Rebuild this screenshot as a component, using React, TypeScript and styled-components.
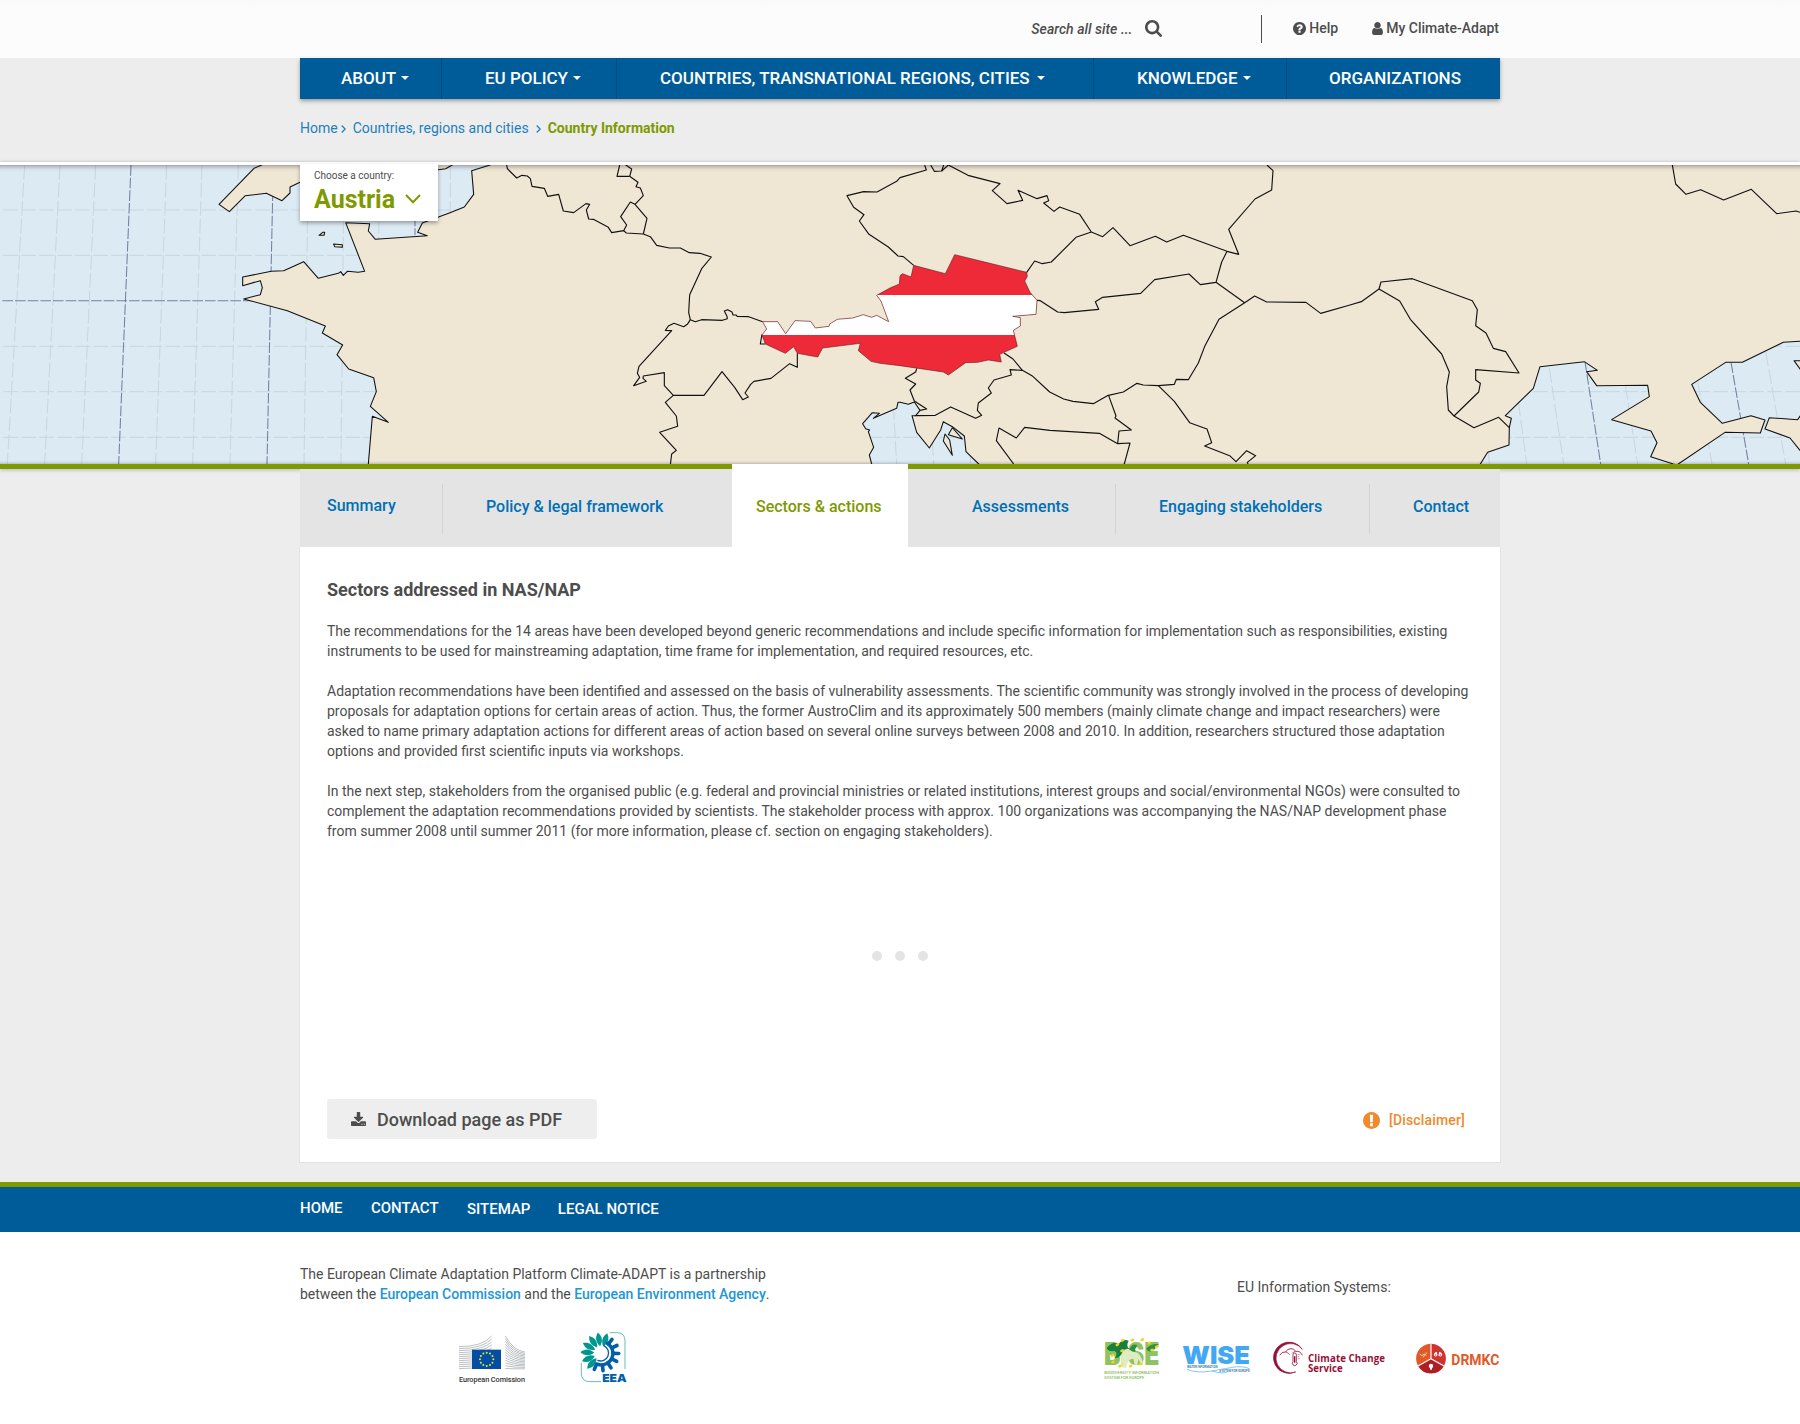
import React from "react";
import styled, { createGlobalStyle } from "styled-components";

const GlobalStyle = createGlobalStyle`
  *, *::before, *::after { box-sizing: border-box; }
  body { margin: 0; background: #ededed; color: #4d4d4d; font-family: Roboto, "Liberation Sans", sans-serif; font-size: 14px; }
  h2, p { margin: 0; }
  svg { display: block; flex: none; }
  a { color: inherit; text-decoration: none; }
`;

const BLUE = "#005c98";
const GREEN = "#7f9900";

const Page = styled.div`
  width: 1800px;
  height: 1424px;
  overflow: hidden;
  display: flex;
  flex-direction: column;
`;

const Container = styled.div`
  width: 1200px;
  margin: 0 auto;
`;

const TopBar = styled.header`
  height: 58px;
  background: linear-gradient(#fafafa, #fcfcfc 10px);
`;

const TopTools = styled(Container)`
  display: flex;
  align-items: center;
  justify-content: flex-end;
  height: 56px;
  padding-right: 1px;
  font-weight: 500;
  line-height: 20px;
`;

const SearchLabel = styled.span`
  font-style: italic;
  letter-spacing: 0.04px;
  margin: 2px 13px 0 0;
`;

const Separator = styled.span`
  width: 1px;
  height: 28px;
  margin: 2px 31px 0 99px;
  background: #4d4d4d;
`;

const ToolLink = styled.a<{ $after?: number }>`
  display: flex;
  align-items: center;
  gap: 3px;
  margin-right: ${(p) => p.$after ?? 0}px;
`;

const MainNav = styled.nav`
  position: relative;
  width: 1200px;
  height: 41px;
  margin: 0 auto;
  display: grid;
  grid-template-columns: 142px 175px 477px 193px 213px;
  background: ${BLUE};
  box-shadow: 0 2px 4px rgba(0, 0, 0, 0.35);
`;

const NavItem = styled.a<{ $indent: number; $gap?: number }>`
  display: flex;
  align-items: center;
  gap: ${(p) => p.$gap ?? 5}px;
  padding: 0 0 2px ${(p) => p.$indent}px;
  border-right: 1px solid #004c80;
  color: #fff;
  font-size: 17px;
  line-height: 20px;
  font-weight: 500;
  white-space: nowrap;
  &:last-child { border-right: 0; }
`;

const Caret = styled.i`
  border: 4px solid transparent;
  border-top-color: #fff;
  border-bottom: 0;
`;

const Breadcrumb = styled(Container)`
  display: flex;
  align-items: center;
  height: 63px;
  padding-bottom: 5px;
  color: #1f7fbc;
  line-height: 20px;
`;

const Crumb = styled.a<{ $current?: boolean }>`
  color: ${(p) => (p.$current ? GREEN : "inherit")};
  font-weight: ${(p) => (p.$current ? 700 : 400)};
`;

const CrumbArrow = styled.svg<{ $before: number; $after: number }>`
  margin: 1px ${(p) => p.$after}px 0 ${(p) => p.$before}px;
`;

const Hero = styled.section`
  position: relative;
  height: 307px;
  border-top: 3px solid #fff;
  border-bottom: 5px solid ${GREEN};
  box-shadow: 0 -1px 2px rgba(0, 0, 0, 0.12), 0 2px 3px rgba(0, 0, 0, 0.15);
  &::after {
    content: "";
    position: absolute;
    inset: 0 -8px;
    box-shadow: inset 0 2px 4px rgba(0, 0, 0, 0.3), inset 0 -1px 3px rgba(0, 0, 0, 0.18);
  }
`;

const CountryPicker = styled.div`
  position: absolute;
  z-index: 1;
  left: 300px;
  top: -1px;
  width: 138px;
  height: 57px;
  padding: 5px 14px 0;
  background: #fff;
  box-shadow: 0 2px 4px rgba(0, 0, 0, 0.35);
`;

const PickerLabel = styled.div`
  font-size: 10px;
  line-height: 14px;
`;

const PickerValue = styled.div`
  display: flex;
  align-items: center;
  justify-content: space-between;
  padding-right: 3px;
  margin-top: 2px;
  color: ${GREEN};
  font-size: 25px;
  font-weight: 700;
  line-height: 30px;
`;

const Chevron = styled.svg`
  margin-top: -2px;
`;

const Tabs = styled.nav`
  position: relative;
  width: 1200px;
  height: 78px;
  margin: 0 auto;
  display: grid;
  grid-template-columns: 142px 290px 176px 207px 254px 131px;
  background: #e4e4e4;
`;

const Tab = styled.a<{ $indent: number; $active?: boolean; $divided?: boolean; $lift?: number }>`
  position: relative;
  margin-top: ${(p) => (p.$active ? -5 : 0)}px;
  padding: ${(p) => (p.$active ? 33 : 28 - (p.$lift ?? 0))}px 0 0 ${(p) => p.$indent}px;
  background: ${(p) => (p.$active ? "#fff" : "transparent")};
  color: ${(p) => (p.$active ? GREEN : "#0070b4")};
  font-size: 16px;
  font-weight: 500;
  line-height: 20px;
  white-space: nowrap;
  &::after {
    content: "";
    display: ${(p) => (p.$divided ? "block" : "none")};
    position: absolute;
    right: -1px;
    top: 15px;
    width: 1px;
    height: 50px;
    background: #d3d3d3;
  }
`;

const Panel = styled.main`
  width: 1200px;
  height: 615px;
  margin: 0 auto 20px;
  padding: 31px 27px 23px;
  background: #fff;
  box-shadow: 0 0 0 1px #e3e3e3;
  display: flex;
  flex-direction: column;
  clip-path: inset(0 -1px -1px -1px);
`;

const Title = styled.h2`
  font-size: 18px;
  line-height: 24px;
  font-weight: 700;
  margin-bottom: 19px;
`;

const Prose = styled.div`
  display: flex;
  flex-direction: column;
  gap: 20px;
  line-height: 20px;
  white-space: nowrap;
`;

const Dots = styled.div`
  display: flex;
  justify-content: center;
  gap: 13px;
  margin-top: 110px;
`;

const Dot = styled.i`
  width: 10px;
  height: 10px;
  border-radius: 50%;
  background: #e4e4e4;
`;

const Actions = styled.div`
  display: flex;
  align-items: center;
  justify-content: space-between;
  margin-top: auto;
`;

const DownloadButton = styled.button`
  display: flex;
  align-items: center;
  gap: 11px;
  width: 270px;
  height: 40px;
  padding: 0 0 0 24px;
  border: 0;
  border-radius: 3px;
  background: #eee;
  color: #4d4d4d;
  font: 500 18px Roboto, sans-serif;
`;

const Disclaimer = styled.a`
  display: flex;
  align-items: center;
  gap: 9px;
  margin-right: 8px;
  padding-top: 2px;
  color: #f08a2c;
  font-weight: 500;
  letter-spacing: 0.15px;
`;

const FooterBar = styled.div`
  height: 50px;
  border-top: 5px solid ${GREEN};
  background: ${BLUE};
`;

const FooterLinks = styled(Container)`
  display: flex;
  gap: 28.4px;
  padding-top: 11px;
  color: #fff;
  font-size: 15px;
  font-weight: 500;
  line-height: 20px;
`;

const FooterLink = styled.a<{ $drop?: boolean }>`
  padding-top: ${(p) => (p.$drop ? 1 : 0)}px;
  &:last-child { margin-left: -1px; }
`;

const Footer = styled.footer`
  flex: 1;
  background: #fff;
`;

const FooterGrid = styled(Container)`
  display: flex;
  justify-content: space-between;
`;

const Partners = styled.div`
  padding-top: 32px;
  line-height: 20px;
`;

const PartnerLink = styled.a`
  color: #2196d8;
  font-weight: 500;
`;

const PartnerLogos = styled.div`
  display: flex;
  gap: 55px;
  margin: 28px 0 0 159px;
`;

const Systems = styled.div`
  width: 396px;
  padding-top: 45px;
  line-height: 20px;
`;

const SystemsLabel = styled.div`
  margin-left: 133px;
`;

const SystemLogos = styled.div`
  display: flex;
  gap: 22px;
  margin-top: 41px;
  svg:last-child { margin-left: auto; }
`;

const LogoSvg = styled.svg`
  overflow: visible;
`;

const icons = {
  search:
    "M1216 832q0-185-131.5-316.5t-316.5-131.5-316.5 131.5-131.5 316.5 131.5 316.5 316.5 131.5 316.5-131.5 131.5-316.5zm512 832q0 52-38 90t-90 38q-54 0-90-38l-343-342q-179 124-399 124-143 0-273.5-55.5t-225-150-150-225-55.5-273.5 55.5-273.5 150-225 225-150 273.5-55.5 273.5 55.5 225 150 150 225 55.5 273.5q0 220-124 399l343 343q37 37 37 90z",
  help: "M1024 1376v-192q0-14-9-23t-23-9h-192q-14 0-23 9t-9 23v192q0 14 9 23t23 9h192q14 0 23-9t9-23zm256-672q0-88-55.5-163t-138.5-116-170-41q-243 0-371 213-15 24 8 42l132 100q7 6 19 6 16 0 25-12 53-68 86-92 34-24 86-24 48 0 85.5 26t37.5 59q0 38-20 61t-68 45q-63 28-115.5 86.5t-52.5 125.5v36q0 14 9 23t23 9h192q14 0 23-9t9-23q0-19 21.5-49.5t54.5-49.5q32-18 49-28.5t46-35 44.5-48 28-60.5 12.5-81zm384 192q0 209-103 385.5t-279.5 279.5-385.5 103-385.5-103-279.5-279.5-103-385.5 103-385.5 279.5-279.5 385.5-103 385.5 103 279.5 279.5 103 385.5z",
  user: "M1536 1399q0 109-62.5 187t-150.5 78h-854q-88 0-150.5-78t-62.5-187q0-85 8.5-160.5t31.5-152 58.5-131 94-89 134.5-34.5q131 128 313 128t313-128q76 0 134.5 34.5t94 89 58.5 131 31.5 152 8.5 160.5zm-256-887q0 159-112.5 271.5t-271.5 112.5-271.5-112.5-112.5-271.5 112.5-271.5 271.5-112.5 271.5 112.5 112.5 271.5z",
  download:
    "M1280 1344q0-26-19-45t-45-19-45 19-19 45 19 45 45 19 45-19 19-45zm256 0q0-26-19-45t-45-19-45 19-19 45 19 45 45 19 45-19 19-45zm128-224v320q0 40-28 68t-68 28h-1472q-40 0-68-28t-28-68v-320q0-40 28-68t68-28h465l135 136q58 56 136 56t136-56l136-136h464q40 0 68 28t28 68zm-325-569q17 41-14 70l-448 448q-18 19-45 19t-45-19l-448-448q-31-29-14-70 17-39 59-39h256v-448q0-26 19-45t45-19h256q26 0 45 19t19 45v448h256q42 0 59 39z",
  alert:
    "M896 128q209 0 385.5 103t279.5 279.5 103 385.5-103 385.5-279.5 279.5-385.5 103-385.5-103-279.5-279.5-103-385.5 103-385.5 279.5-279.5 385.5-103zm128 1247v-190q0-14-9-23.5t-22-9.5h-192q-13 0-23 10t-10 23v190q0 13 10 23t23 10h192q13 0 22-9.5t9-23.5zm-2-344l18-621q0-12-10-18-10-8-24-8h-220q-14 0-24 8-10 6-10 18l17 621q0 10 10 17.5t24 7.5h185q14 0 23.5-7.5t10.5-17.5z",
};

function Icon({ name, box, w, h }: { name: keyof typeof icons; box: string; w: number; h: number }) {
  return (
    <svg viewBox={box} width={w} height={h} fill="currentColor">
      <path d={icons[name]} />
    </svg>
  );
}

/* Map geometry: four 1350-unit tiles side by side, three units to a pixel. */
type Line = [number, string];

const land =
  "M1100 990L1105 927L1117 784L1165 802L1111 754L1129 710L1121 668L1046 642L1011 599L1028 570L967 534L976 513L862 467L731 432L781 419L787 398L781 377L728 392V366L814 349L851 347L911 320L955 370L1015 355L1022 350L1030 361L1042 349L1075 352L1094 349L1037 203L1109 206L1105 228L1126 253L1282 242L1253 232L1267 204L1350 173L1393 156L1421 118L1415 47L1470 30L1520 0H5500V990Z" +
  "M2622 960L2615 927L2608 900L2621 877L2605 830L2609 825L2597 821L2588 806L2617 773L2638 775L2620 790L2690 760L2694 742H2700L2725 748L2743 741L2760 766L2747 782H2736L2750 832L2788 879L2822 825L2830 800L2857 815L2893 843L2898 890L2936 927L2970 960Z" +
  "M4421 960L4441 927L4463 892L4527 870L4528 818L4534 790L4516 782L4600 700L4620 635L4753 620L4792 646L4760 650L4790 692L4943 691L4948 725L4835 794L4953 828L4971 863L4952 905L5020 927L5100 950V990Z" +
  "M4980 963L5035 927L5175 832L5281 834L5295 795L5253 782L5167 805L5101 742L5075 688L5177 622H5227L5350 562L5400 559L5430 558V617H5382L5400 642L5430 670V740L5406 775L5393 794L5308 788L5295 822L5370 849L5400 886L5430 910V990Z";

const islands =
  "M657 148L762 40L785 30L800 15H1380L1350 34L1337 41L1314 44L1250 60L900 82L870 96V114L846 137L799 115L736 122L688 170Z" +
  "M957 241L968 232H974L972 241ZM1001 267L1027 269V277L1004 275Z" +
  "M2857 818L2887 852L2845 839ZM2835 837L2849 855L2857 901L2830 858Z";

const borders: Line[] = [
  [1350, "170,30 172,41 200,69 216,61 232,63 241,71 246,94 283,100 293,124 326,118 340,168 371,173 408,146 419,148 409,165 416,192 430,193 475,217 485,233 521,227 529,234 580,237 601,245 620,271 658,279 691,279 718,293 750,295 784,306 755,341 719,419 716,473 721,494 736,500 755,494 817,496 832,491 831,484 823,468 833,464 846,471 849,480 858,480 862,484 896,485 938,500"],
  [1350, "521,227 530,210 512,185 541,141 555,148 591,190 580,237"],
  [1350, "555,148 580,122 571,99 558,95 564,82 539,64 545,42 527,30"],
  [1350, "509,30 501,64 539,64"],
  [1350, "721,494 712,508 701,515 672,505 655,513 646,526 665,527 567,634 562,655 569,667 551,692 589,679 579,670 580,663 643,653 643,692 670,721 762,721 816,650 854,697 878,734 895,726 885,714 902,688 912,679 963,670 1019,626 1042,637 1042,595"],
  [1350, "670,721 646,742 679,783 683,814 629,832 679,886 665,897 661,930"],
  [1350, "936,538 931,567 946,567"],
  [2700, "74,30 79,45 0,68 -10,79 -69,111 -109,110 -159,122 -139,157 -108,179 -122,198 -93,238 -35,276 -6,303 10,305 41,331"],
  [2700, "92,30 103,49 125,48 145,30 204,61 300,86 277,107 321,146 368,136 354,106 411,131 441,122 446,137 431,144 462,169 479,156 539,178 574,231 608,245 639,218 690,272 766,244 800,261 850,241 981,289 1016,298 986,223 1065,132 1115,105 1119,47 1101,30"],
  [2700, "125,48 131,30"],
  [2700, "574,231 528,247 454,321 427,326 404,318 380,352"],
  [2700, "981,289 965,321 948,382 901,389 867,357 764,374 722,415 608,427 586,440 596,463 493,473 473,471 421,437 411,436"],
  [2700, "948,382 1034,443 957,493 915,572 895,624 865,674 829,673 823,688 775,692 730,690 711,685 670,711 622,722 580,746 519,739 491,732 449,711 396,662 367,646 339,612 312,594"],
  [2700, "1034,443 1064,423 1100,441 1218,442 1262,475 1350,450 1384,440 1437,402"],
  [4050, "87,402 93,381 187,371 367,437 382,464 377,512 408,534 430,580 467,590 507,654 377,644 377,675 391,685 386,711 312,783"],
  [4050, "87,402 149,438 181,493 275,597 298,651 290,695 295,765 312,783 372,818 446,787 478,818"],
  [4050, "967,30 977,87 1008,118 1052,104 1121,135 1204,103 1280,176 1338,168 1350,172"],
  [2700, "50,640 47,651 16,670 47,687 30,705 43,738 80,762 60,766"],
  [2700, "47,782 106,781 152,756 227,790 245,781 232,766 235,744 274,714 265,699 282,675 334,660 330,644 367,646"],
  [2700, "341,927 289,857 297,819 349,849 374,817 450,826 598,835 653,866 690,864 672,930"],
  [2700, "653,866 657,828 694,825 645,789 648,783 626,722"],
  [2700, "775,692 823,739 869,803 921,822 935,863 914,873 989,902 1008,920 1040,887 1067,902 1042,922 1045,930"],
];

const austria =
  "M2288 500H2333L2357 536L2385 497L2432 499L2446 519L2487 514L2489 507L2512 493L2558 489L2590 479L2615 487L2630 481L2666 500L2643 438L2630 421L2670 399L2698 387L2700 362L2708 356L2733 366L2741 331L2836 356L2864 299L2954 321L3080 352L3082 364L3074 378L3090 412L3111 436L3108 478L3038 484L3061 488V513L3040 526L3052 574L2999 598L3004 621L2965 615L2933 622L2897 623L2845 660L2830 651L2700 632L2640 625L2613 619L2575 587L2581 565L2468 579L2453 606L2392 595L2381 575L2356 595L2296 567L2286 540L2300 522Z";

const meridians: [number, number, number, number][] = [
  [74, 30, 22, 927], [180, 30, 134, 927], [287, 30, 245, 927], [500, 30, 467, 927], [606, 30, 578, 927],
  [715, 30, 690, 927], [925, 30, 912, 927], [1032, 30, 1023, 927], [1138, 30, 1136, 260], [1351, 30, 1351, 180],
  [2680, 750, 2690, 927], [2797, 860, 2801, 927], [2910, 880, 2912, 927], [4465, 890, 4468, 927],
  [4555, 740, 4580, 927], [4648, 640, 4691, 927], [4876, 690, 4913, 927], [5093, 680, 5136, 927], [5297, 590, 5357, 927],
];

const mainMeridians: [number, number, number, number][] = [
  [393, 30, 356, 927], [820, 30, 801, 927], [1245, 30, 1245, 240], [4755, 620, 4802, 927], [5193, 622, 5246, 927],
];

function EuropeMap() {
  return (
    <svg viewBox="0 30 5400 897" width="1800" height="299">
      <defs>
        <clipPath id="austria">
          <path d={austria} />
        </clipPath>
      </defs>
      <rect y="30" width="5400" height="897" fill="#dceaf3" />
      <g stroke="#c8d6de" strokeWidth="3" strokeDasharray="44 10">
        {meridians.map(([x1, y1, x2, y2]) => (
          <line key={x1} x1={x1} y1={y1} x2={x2} y2={y2} />
        ))}
        {[165, 301, 574, 710, 847].map((y) => (
          <line key={y} x1="10" x2="5400" y1={y} y2={y} />
        ))}
      </g>
      <g stroke="#77809f" strokeWidth="3.2" strokeDasharray="32 6">
        {mainMeridians.map(([x1, y1, x2, y2]) => (
          <line key={x1} x1={x1} y1={y1} x2={x2} y2={y2} />
        ))}
        <line x1="7" x2="760" y1="437" y2="437" />
      </g>
      <g fill="#efe6d4" stroke="#111" strokeWidth="3.2" strokeLinejoin="round">
        <path d={land} fillRule="evenodd" />
        <path d={islands} />
      </g>
      <g fill="none" stroke="#111" strokeWidth="3.4" strokeLinejoin="round">
        {borders.map(([dx, points]) => (
          <polyline key={points} points={points} transform={`translate(${dx} 0)`} />
        ))}
      </g>
      <g clipPath="url(#austria)">
        <rect x="2270" y="290" width="860" height="380" fill="#ee2a39" />
        <rect x="2270" y="420" width="860" height="120" fill="#fff" />
      </g>
      <path d={austria} fill="none" stroke="#5a1a20" strokeWidth="1.8" />
    </svg>
  );
}

const range = (n: number) => Array.from({ length: n }, (_, i) => i);

function CommissionLogo() {
  return (
    <LogoSvg viewBox="507 756 198 156" width="66" height="52">
      <g fill="none" stroke="#a3a7aa" strokeWidth="2.2">
        {range(12).map((i) => (
          <path key={i} d={`M507 ${800 + i * 6}Q578 ${800 + i * 5.6} 605 ${768 + i * 9}`} />
        ))}
        {range(13).map((i) => (
          <path key={i} d={`M646 ${768 + i * 8.1}Q670 ${812 + i * 4.6} 705 ${816 + i * 4.2}`} />
        ))}
      </g>
      <rect x="546" y="809" width="87" height="58" fill="#034ea2" />
      {range(12).map((i) => (
        <circle key={i} cx={590 + 20 * Math.sin((i * Math.PI) / 6)} cy={838 - 20 * Math.cos((i * Math.PI) / 6)} r="3" fill="#e8e337" />
      ))}
      <text x="507" y="905" fontSize="22" fontWeight="500" fill="#333" textLength="198">
        European Comission
      </text>
    </LogoSvg>
  );
}

function EeaLogo() {
  return (
    <LogoSvg viewBox="870 756 142 154" width="47" height="51">
      <g fill="none" stroke="#66bdb5" strokeWidth="3">
        <path d="M960 758H982Q1006 758 1006 783V868" />
        <path d="M874 849V880Q874 906 900 906H934" />
      </g>
      <g fill="#009790">
        {[17, -9, -35, -61, -87, -113, -138].map((a) => (
          <path key={a} d="M0 -21C-12 -36 -11 -50 0 -63C11 -50 12 -36 0 -21Z" transform={`translate(934 820) rotate(${a})`} />
        ))}
      </g>
      <g stroke="#005fa8" strokeWidth="11" fill="none" strokeLinecap="round">
        {[38, 64, 91, 118, 146, 174, 203].map((a) => (
          <path key={a} d="M0 -36V-53" transform={`translate(934 820) rotate(${a})`} />
        ))}
        <path d="M952 790A35 35 0 0 1 922 853" strokeWidth="10" />
        <path d="M943 798A24 24 0 0 1 924 842" strokeWidth="4" />
      </g>
      <text x="937" y="907" fontSize="33" fontWeight="900" fill="#005fa8" fontFamily="Inter, sans-serif" textLength="74" lengthAdjust="spacingAndGlyphs">
        EEA
      </text>
    </LogoSvg>
  );
}

function BiseLogo() {
  return (
    <LogoSvg viewBox="72 238 168 126" width="56" height="42">
      <text x="72" y="320" fontSize="95" fontWeight="900" fill="#8fc262" fontFamily="Inter, sans-serif" textLength="166" lengthAdjust="spacingAndGlyphs">
        BISE
      </text>
      <path d="M114 284Q138 264 160 280Q182 276 190 318H182L176 300L172 318H164L160 300Q142 300 138 328L126 326Q130 300 114 284Z" fill="#dfecc0" />
      <path d="M80 268Q98 246 116 256Q128 240 146 246Q136 262 150 272Q130 266 126 284Q118 300 104 298Q116 282 102 276Q88 282 80 268Z" fill="#17803c" />
      <path d="M148 272Q158 252 172 260Q164 270 166 280Q156 280 148 272ZM198 270Q212 254 236 256Q226 274 212 279Q202 278 198 270Z" fill="#2c8f43" />
      <g fill="#f5d321">
        {[[128, 245], [157, 244], [187, 243], [208, 253], [230, 264], [216, 274], [112, 258], [98, 290], [99, 310], [120, 322], [152, 322], [182, 316], [126, 276]].map(([x, y]) => (
          <ellipse key={`${x}-${y}`} cx={x} cy={y} rx="6" ry="4" transform={`rotate(-25 ${x} ${y})`} />
        ))}
      </g>
      <g fontSize="12" fontWeight="500" fill="#7fbb55" fontFamily="Roboto, sans-serif">
        <text x="73" y="346" textLength="164">BIODIVERSITY INFORMATION</text>
        <text x="73" y="360" textLength="120">SYSTEM FOR EUROPE</text>
      </g>
    </LogoSvg>
  );
}

function WiseLogo() {
  return (
    <LogoSvg viewBox="306 238 207 126" width="69" height="42">
      <text x="307" y="316" fontSize="75" fontWeight="900" fill="#42a8f5" fontFamily="Inter, sans-serif" textLength="203" lengthAdjust="spacingAndGlyphs">
        WISE
      </text>
      <g fontSize="9" fontWeight="700" fill="#3d7fb5" fontFamily="Roboto, sans-serif">
        <text x="321" y="328" textLength="92" lengthAdjust="spacingAndGlyphs">WATER INFORMATION</text>
        <text x="418" y="341" textLength="91" lengthAdjust="spacingAndGlyphs">SYSTEM FOR EUROPE</text>
      </g>
      <path d="M321 332Q350 345 395 337T470 324Q500 324 509 331M395 337Q430 346 440 341" fill="none" stroke="#6bbcf7" strokeWidth="2.5" />
    </LogoSvg>
  );
}

function ClimateLogo() {
  return (
    <LogoSvg viewBox="580 238 338 126" width="112.7" height="42" fill="none" stroke="#960f37">
      <path d="M668 272A47 47 0 1 0 648 340A44 44 0 1 1 668 272Z" fill="#960f37" strokeWidth="2" />
      <path d="M600 290Q606 278 618 280Q622 270 634 270Q644 270 648 278Q662 276 668 290" strokeWidth="2.5" />
      <path d="M618 280Q626 282 630 288M648 278Q640 279 638 284" strokeWidth="2" />
      <path d="M640 309V288Q640 283 645 283Q650 283 650 288V309A7 7 0 1 1 640 309Z" strokeWidth="2.5" />
      <path d="M645 293V312" strokeWidth="4" />
      <path d="M654 288H660M654 294H659M654 300H660" strokeWidth="1.5" />
      <g fill="#960f37" stroke="none" fontFamily="Open Sans, sans-serif" fontSize="29" fontWeight="700">
        <text x="685" y="310" textLength="231">Climate Change</text>
        <text x="685" y="341" textLength="104">Service</text>
      </g>
    </LogoSvg>
  );
}

function DrmkcLogo() {
  return (
    <LogoSvg viewBox="1008 238 252 126" width="84" height="42">
      <path d="M1053 300L1014 322A45 45 0 0 1 1053 255Z" fill="#e05a27" />
      <path d="M1053 300V255A45 45 0 0 1 1092 322Z" fill="#cf3430" />
      <path d="M1053 300L1092 322A45 45 0 0 1 1014 322Z" fill="#b01e24" />
      <path d="M1053 255V300L1014 322M1053 300L1092 322" stroke="#fff" strokeWidth="3.5" fill="none" />
      <path d="M1019 286L1026 291L1032 286L1039 290M1030 296L1034 288M1036 283L1041 284" stroke="#fff" strokeWidth="2" fill="none" />
      <g fill="#fff">
        <circle cx="1067" cy="288" r="5.5" />
        <circle cx="1081" cy="288" r="5.5" />
        <rect x="1066" y="280" width="5" height="6" />
        <rect x="1077" y="280" width="5" height="6" />
        <circle cx="1053" cy="322" r="6.5" />
        <rect x="1050" y="327" width="6" height="6" />
      </g>
      <circle cx="1067" cy="289" r="2" fill="#cf3430" />
      <circle cx="1081" cy="289" r="2" fill="#cf3430" />
      <text x="1114" y="318" fontSize="42" fontWeight="700" fill="#e05a27" textLength="144" lengthAdjust="spacingAndGlyphs">
        DRMKC
      </text>
    </LogoSvg>
  );
}

function Arrow({ before, after }: { before: number; after: number }) {
  return (
    <CrumbArrow $before={before} $after={after} width="5" height="8" viewBox="0 0 5 8">
      <path d="M0.7 0.5L4.2 4L0.7 7.5" fill="none" stroke="#1f7fbc" strokeWidth="1.3" />
    </CrumbArrow>
  );
}

export default function App() {
  return (
    <Page>
      <GlobalStyle />
      <TopBar>
        <TopTools>
          <SearchLabel>Search all site ...</SearchLabel>
          <Icon name="search" box="64 128 1664 1664" w={17} h={17} />
          <Separator />
          <ToolLink $after={34}>
            <Icon name="help" box="128 128 1536 1536" w={13} h={13} />
            Help
          </ToolLink>
          <ToolLink>
            <Icon name="user" box="256 128 1280 1536" w={11} h={13} />
            My Climate-Adapt
          </ToolLink>
        </TopTools>
      </TopBar>
      <MainNav>
        <NavItem $indent={41}>ABOUT <Caret /></NavItem>
        <NavItem $indent={43}>EU POLICY <Caret /></NavItem>
        <NavItem $indent={43} $gap={7}>COUNTRIES, TRANSNATIONAL REGIONS, CITIES <Caret /></NavItem>
        <NavItem $indent={43}>KNOWLEDGE <Caret /></NavItem>
        <NavItem $indent={42}>ORGANIZATIONS</NavItem>
      </MainNav>
      <Breadcrumb>
        <Crumb>Home</Crumb>
        <Arrow before={3} after={7} />
        <Crumb>Countries, regions and cities</Crumb>
        <Arrow before={7} after={7} />
        <Crumb $current>Country Information</Crumb>
      </Breadcrumb>
      <Hero>
        <EuropeMap />
        <CountryPicker>
          <PickerLabel>Choose a country:</PickerLabel>
          <PickerValue>
            Austria
            <Chevron width="16" height="10" viewBox="0 0 16 10">
              <path d="M1 1L8 8.2L15 1" fill="none" stroke={GREEN} strokeWidth="2" />
            </Chevron>
          </PickerValue>
        </CountryPicker>
      </Hero>
      <Tabs>
        <Tab $indent={27} $divided $lift={1}>Summary</Tab>
        <Tab $indent={44}>Policy &amp; legal framework</Tab>
        <Tab $indent={24} $active>Sectors &amp; actions</Tab>
        <Tab $indent={64} $divided>Assessments</Tab>
        <Tab $indent={44} $divided>Engaging stakeholders</Tab>
        <Tab $indent={44}>Contact</Tab>
      </Tabs>
      <Panel>
        <Title>Sectors addressed in NAS/NAP</Title>
        <Prose>
          <p>
            The recommendations for the 14 areas have been developed beyond generic recommendations and include specific information for implementation such as responsibilities, existing
            <br />
            instruments to be used for mainstreaming adaptation, time frame for implementation, and required resources, etc.
          </p>
          <p>
            Adaptation recommendations have been identified and assessed on the basis of vulnerability assessments. The scientific community was strongly involved in the process of developing
            <br />
            proposals for adaptation options for certain areas of action. Thus, the former AustroClim and its approximately 500 members (mainly climate change and impact researchers) were
            <br />
            asked to name primary adaptation actions for different areas of action based on several online surveys between 2008 and 2010. In addition, researchers structured those adaptation
            <br />
            options and provided first scientific inputs via workshops.
          </p>
          <p>
            In the next step, stakeholders from the organised public (e.g. federal and provincial ministries or related institutions, interest groups and social/environmental NGOs) were consulted to
            <br />
            complement the adaptation recommendations provided by scientists. The stakeholder process with approx. 100 organizations was accompanying the NAS/NAP development phase
            <br />
            from summer 2008 until summer 2011 (for more information, please cf. section on engaging stakeholders).
          </p>
        </Prose>
        <Dots>
          <Dot />
          <Dot />
          <Dot />
        </Dots>
        <Actions>
          <DownloadButton>
            <Icon name="download" box="0 0 1664 1536" w={15} h={14} />
            Download page as PDF
          </DownloadButton>
          <Disclaimer>
            <Icon name="alert" box="128 128 1536 1536" w={17} h={17} />
            [Disclaimer]
          </Disclaimer>
        </Actions>
      </Panel>
      <FooterBar>
        <FooterLinks>
          <FooterLink>HOME</FooterLink>
          <FooterLink>CONTACT</FooterLink>
          <FooterLink $drop>SITEMAP</FooterLink>
          <FooterLink $drop>LEGAL NOTICE</FooterLink>
        </FooterLinks>
      </FooterBar>
      <Footer>
        <FooterGrid>
          <Partners>
            <p>
              The European Climate Adaptation Platform Climate-ADAPT is a partnership
              <br />
              between the <PartnerLink>European Commission</PartnerLink> and the <PartnerLink>European Environment Agency</PartnerLink>.
            </p>
            <PartnerLogos>
              <CommissionLogo />
              <EeaLogo />
            </PartnerLogos>
          </Partners>
          <Systems>
            <SystemsLabel>EU Information Systems:</SystemsLabel>
            <SystemLogos>
              <BiseLogo />
              <WiseLogo />
              <ClimateLogo />
              <DrmkcLogo />
            </SystemLogos>
          </Systems>
        </FooterGrid>
      </Footer>
    </Page>
  );
}
